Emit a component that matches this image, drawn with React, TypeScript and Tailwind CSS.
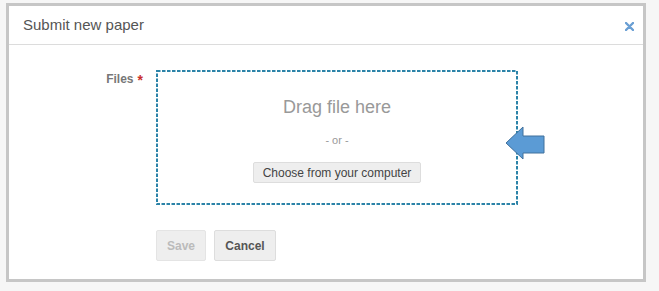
export default function App() {
  return (
    <div
      className="w-[659px] h-[291px] bg-[#f6f6f6] pt-[3px] pl-[6px] overflow-hidden"
      style={{ fontFamily: '"Liberation Sans", Arial, sans-serif' }}
    >
      <div className="w-[640px] h-[279px] border-[3px] border-[#c6c6c6] bg-white flex flex-col">
        {/* Header */}
        <div className="h-[39px] border-b border-[#dcdcdc] flex items-center justify-between pl-[14px] pr-[9px]">
          <span className="text-[15px] text-[#555]">Submit new paper</span>
          <svg width="9" height="9" viewBox="0 0 9 9" className="mt-[2px]">
            <path d="M1 1L8 8M8 1L1 8" stroke="#6a9fd4" strokeWidth="2.4" strokeLinecap="round" />
          </svg>
        </div>

        {/* Body */}
        <div className="flex pt-[25px]">
          <div className="w-[134px] shrink-0 flex justify-end items-start text-[12px] font-bold text-[#777]">
            <span>Files</span>
            <span className="ml-[4px] mt-[2px] text-[#c9302c] text-[14px] leading-[16px]">*</span>
          </div>
          <div className="ml-[13px] flex flex-col">
            <div className="relative">
              <div className="relative w-[362px] h-[135px] flex flex-col items-center">
                <svg width="362" height="135" className="absolute inset-0">
                  <rect
                    x="1"
                    y="1"
                    width="360"
                    height="133"
                    fill="none"
                    stroke="#2b83a8"
                    strokeWidth="2"
                    strokeDasharray="3.5 1.5"
                  />
                </svg>
                <div className="mt-[26px] text-[18px] text-[#999] leading-[22px]">Drag file here</div>
                <div className="mt-[16px] text-[11px] text-[#999] leading-[13px]">- or -</div>
                <div className="mt-[15px] h-[21px] px-[9px] bg-[#eee] border border-[#ddd] rounded-[2px] text-[12px] text-[#444] flex items-center">
                  Choose from your computer
                </div>
              </div>
              <svg
                width="41"
                height="35"
                viewBox="0 0 41 35"
                className="absolute left-[349px] top-[56px]"
              >
                <path
                  d="M1 17L18 1V10H39V27H18V33Z"
                  fill="#5b9bd5"
                  stroke="#41719c"
                  strokeWidth="1"
                  strokeLinejoin="miter"
                />
              </svg>
            </div>
            <div className="flex gap-[8px] mt-[25px]">
              <div className="w-[50px] h-[31px] bg-[#eee] border border-[#e4e4e4] rounded-[2px] flex items-center justify-center text-[12px] font-bold text-[#bbb]">
                Save
              </div>
              <div className="w-[62px] h-[31px] bg-[#eee] border border-[#ddd] rounded-[2px] flex items-center justify-center text-[12px] font-bold text-[#555]">
                Cancel
              </div>
            </div>
          </div>
        </div>
      </div>
    </div>
  )
}
